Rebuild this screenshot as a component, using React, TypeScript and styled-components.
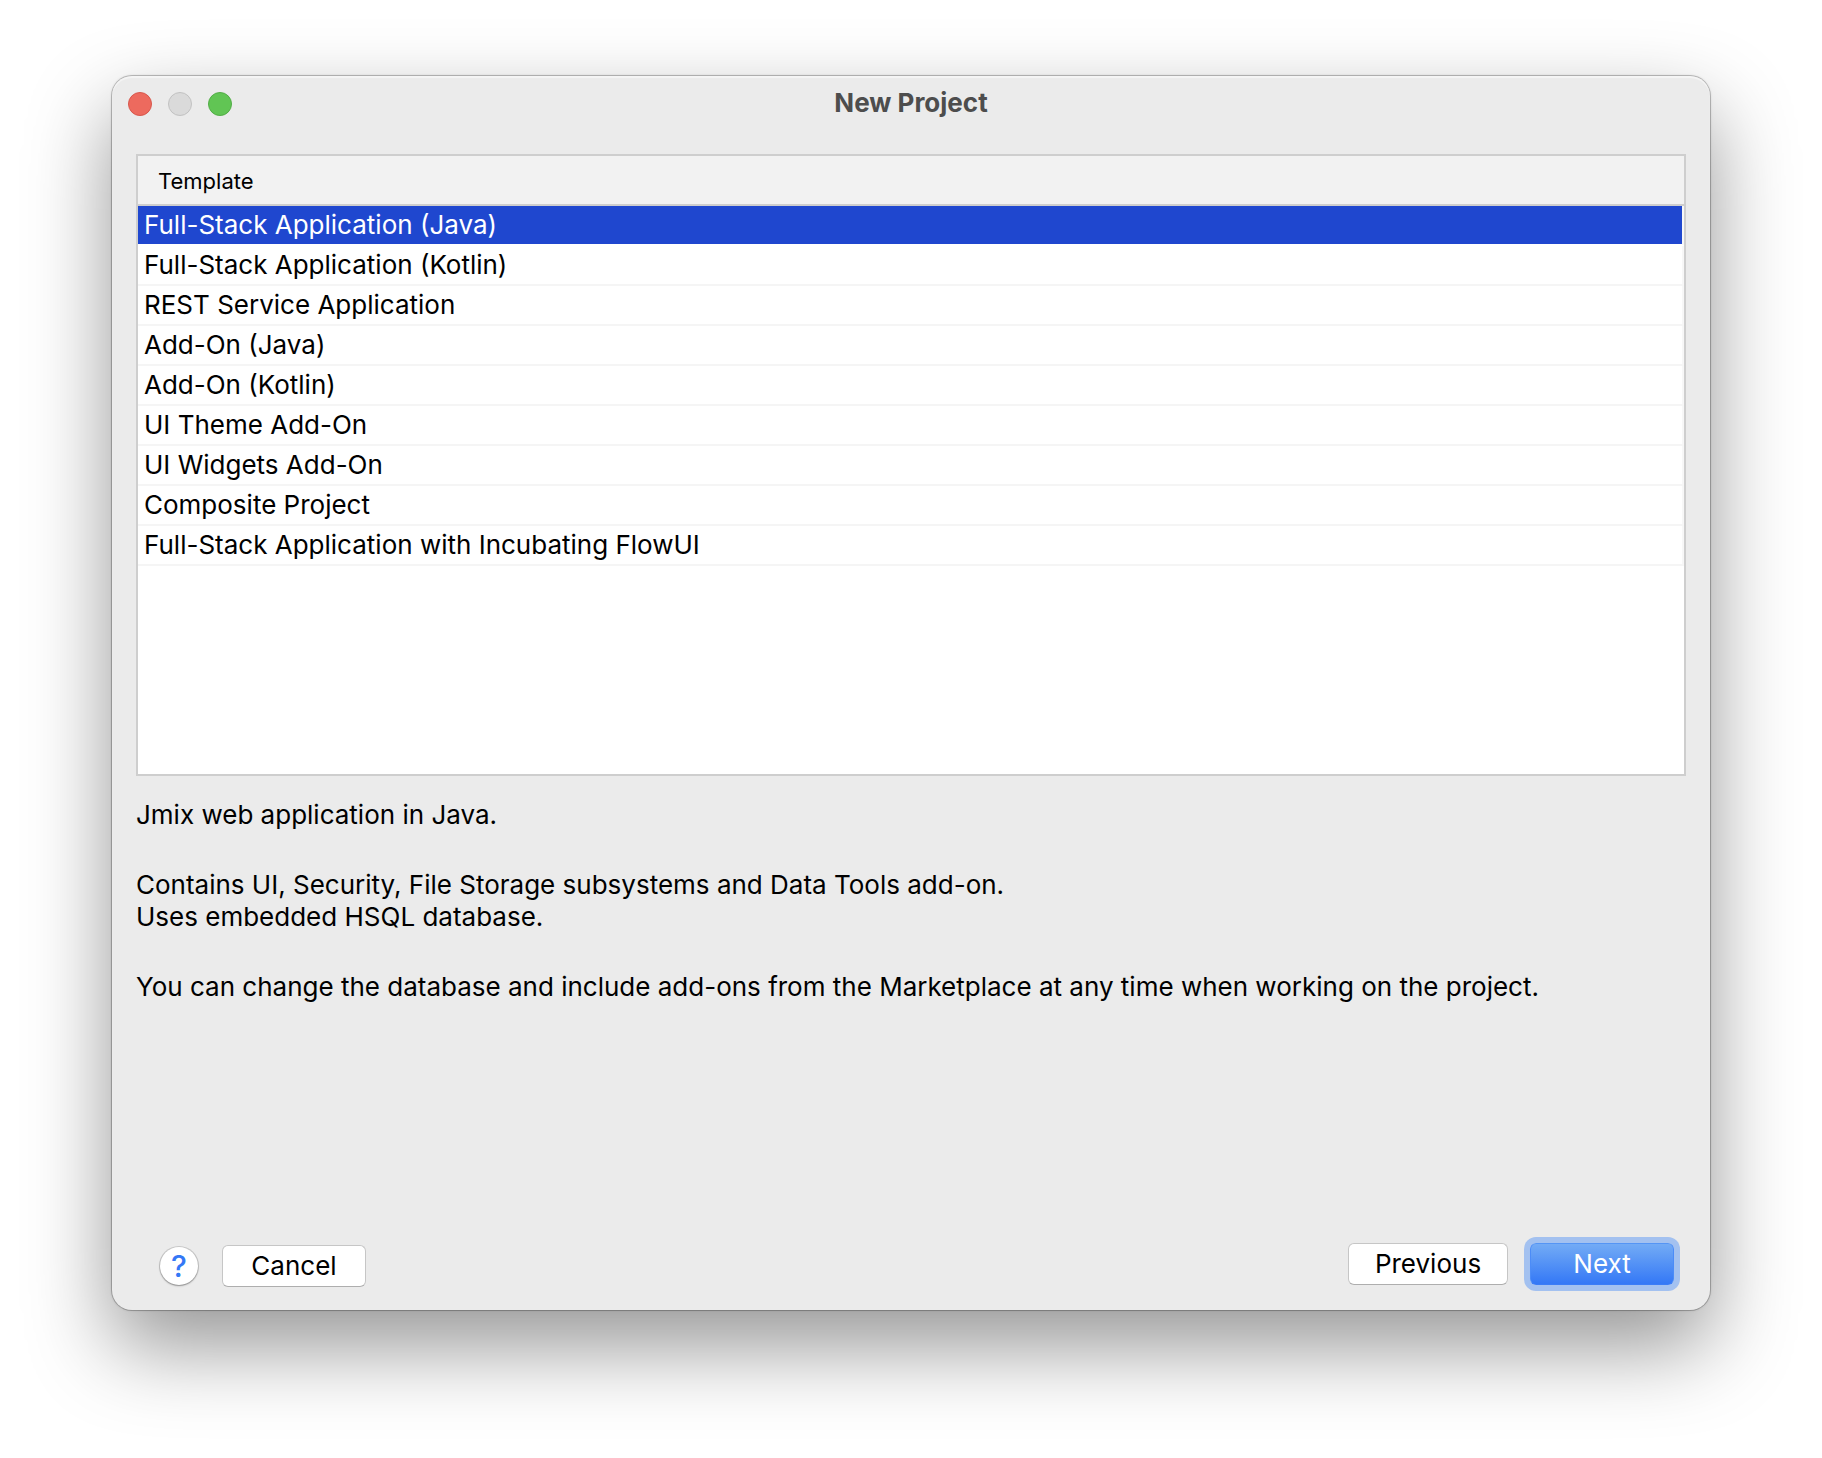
import React, { useState } from "react";
import styled, { createGlobalStyle } from "styled-components";

const GlobalStyle = createGlobalStyle`
  *, *::before, *::after { box-sizing: border-box; }
  body {
    margin: 0;
    background: #fff;
    color: #000;
    font-family: Inter, "Liberation Sans", sans-serif;
    font-size: 26px;
    line-height: 32px;
  }
  button { font: inherit; color: inherit; }
`;

const Desktop = styled.div`
  display: flex;
  min-height: 100vh;
  padding: 76px 112px 148px;
  overflow: hidden;
`;

const Dialog = styled.section`
  display: flex;
  flex: 1;
  flex-direction: column;
  min-width: 0;
  border-radius: 20px;
  background: #ebebeb;
  box-shadow:
    inset 0 2px 1px rgba(255, 255, 255, 0.5),
    0 0 0 1px rgba(0, 0, 0, 0.2),
    0 0 3px rgba(0, 0, 0, 0.2),
    0 36px 84px rgba(0, 0, 0, 0.42);
`;

const TitleBar = styled.header`
  display: grid;
  grid-template-columns: 1fr auto 1fr;
  align-items: center;
  height: 56px;
  padding: 0 16px;
`;

const WindowControls = styled.div`
  display: flex;
  gap: 16px;
`;

const WindowControl = styled.button<{ $fill: string; $edge: string }>`
  width: 24px;
  height: 24px;
  padding: 0;
  border: 1px solid ${(p) => p.$edge};
  border-radius: 50%;
  background: ${(p) => p.$fill};
`;

const Title = styled.h1`
  margin: 0;
  padding-bottom: 2px;
  color: #4d4d4d;
  font-size: 26px;
  font-weight: 700;
`;

const Content = styled.main`
  display: flex;
  flex: 1;
  flex-direction: column;
  padding: 22px 24px 0;
`;

const TableFrame = styled.div`
  flex: 1;
  border: 2px solid #cecece;
  background: #fff;
`;

const Table = styled.table`
  width: 100%;
  border-collapse: separate;
  border-spacing: 0;
`;

const HeadCell = styled.th`
  height: 50px;
  padding: 2px 20px 0;
  border-bottom: 2px solid #cecece;
  background: #f2f2f2;
  font-size: 22px;
  font-weight: 400;
  text-align: left;
`;

const Cell = styled.td<{ $selected: boolean }>`
  height: 40px;
  padding: 0 6px;
  border-right: 2px solid #f7f7f7;
  border-bottom: 2px solid ${(p) => (p.$selected ? "#fff" : "#f5f5f5")};
  background: ${(p) => (p.$selected ? "#1f47cf" : "#fff")};
  background-clip: padding-box;
  color: ${(p) => (p.$selected ? "#fff" : "#000")};
  cursor: default;
`;

const Description = styled.div`
  display: flex;
  flex-direction: column;
  gap: 38px;
  min-height: 452px;
  padding-top: 23px;
`;

const Paragraph = styled.p`
  margin: 0;
`;

const Footer = styled.footer`
  display: flex;
  align-items: center;
  justify-content: space-between;
  height: 82px;
  padding: 0 36px 10px 48px;
`;

const ButtonGroup = styled.div<{ $gap: number; $top?: number }>`
  display: flex;
  align-items: center;
  gap: ${(p) => p.$gap}px;
  padding-top: ${(p) => p.$top ?? 0}px;
`;

const PushButton = styled.button<{ $wide?: boolean }>`
  width: ${(p) => (p.$wide ? 160 : 144)}px;
  height: 42px;
  padding: 0;
  border: 1px solid #c6c6c6;
  border-bottom-color: #aeaeae;
  border-radius: 6px;
  background: #fff;
`;

const DefaultButton = styled(PushButton)`
  border-color: #5595f5 #4c8cf7 #3b7df7;
  background: linear-gradient(#73abf5, #3478f6);
  box-shadow: 0 0 0 6px #a3c1f0;
  color: #fff;
`;

const HelpButton = styled.button`
  width: 38px;
  height: 38px;
  padding: 0;
  border: 0;
  border-radius: 50%;
  background: #fff;
  box-shadow: 0 0 0 1px rgba(0, 0, 0, 0.14), 0 1px 2px rgba(0, 0, 0, 0.3);
  color: #3478f6;
  font-size: 30px;
  font-weight: 500;
`;

const templates = [
  "Full-Stack Application (Java)",
  "Full-Stack Application (Kotlin)",
  "REST Service Application",
  "Add-On (Java)",
  "Add-On (Kotlin)",
  "UI Theme Add-On",
  "UI Widgets Add-On",
  "Composite Project",
  "Full-Stack Application with Incubating FlowUI",
];

export default function App() {
  const [selected, setSelected] = useState(0);

  return (
    <>
      <GlobalStyle />
      <Desktop>
        <Dialog role="dialog" aria-labelledby="dialog-title">
          <TitleBar>
            <WindowControls>
              <WindowControl aria-label="Close" $fill="#ed6a5e" $edge="#d8574c" />
              <WindowControl aria-label="Minimize" disabled $fill="#dadada" $edge="#c2c2c2" />
              <WindowControl aria-label="Zoom" $fill="#61c554" $edge="#52ad46" />
            </WindowControls>
            <Title id="dialog-title">New Project</Title>
          </TitleBar>
          <Content>
            <TableFrame>
              <Table>
                <thead>
                  <tr>
                    <HeadCell scope="col">Template</HeadCell>
                  </tr>
                </thead>
                <tbody>
                  {templates.map((name, i) => (
                    <tr key={name} aria-selected={i === selected} onClick={() => setSelected(i)}>
                      <Cell $selected={i === selected}>{name}</Cell>
                    </tr>
                  ))}
                </tbody>
              </Table>
            </TableFrame>
            <Description>
              <Paragraph>Jmix web application in Java.</Paragraph>
              <Paragraph>
                Contains UI, Security, File Storage subsystems and Data Tools add-on.
                <br />
                Uses embedded HSQL database.
              </Paragraph>
              <Paragraph>
                You can change the database and include add-ons from the Marketplace at any time when working on the
                project.
              </Paragraph>
            </Description>
          </Content>
          <Footer>
            <ButtonGroup $gap={24} $top={4}>
              <HelpButton aria-label="Help">?</HelpButton>
              <PushButton>Cancel</PushButton>
            </ButtonGroup>
            <ButtonGroup $gap={22}>
              <PushButton $wide>Previous</PushButton>
              <DefaultButton>Next</DefaultButton>
            </ButtonGroup>
          </Footer>
        </Dialog>
      </Desktop>
    </>
  );
}
